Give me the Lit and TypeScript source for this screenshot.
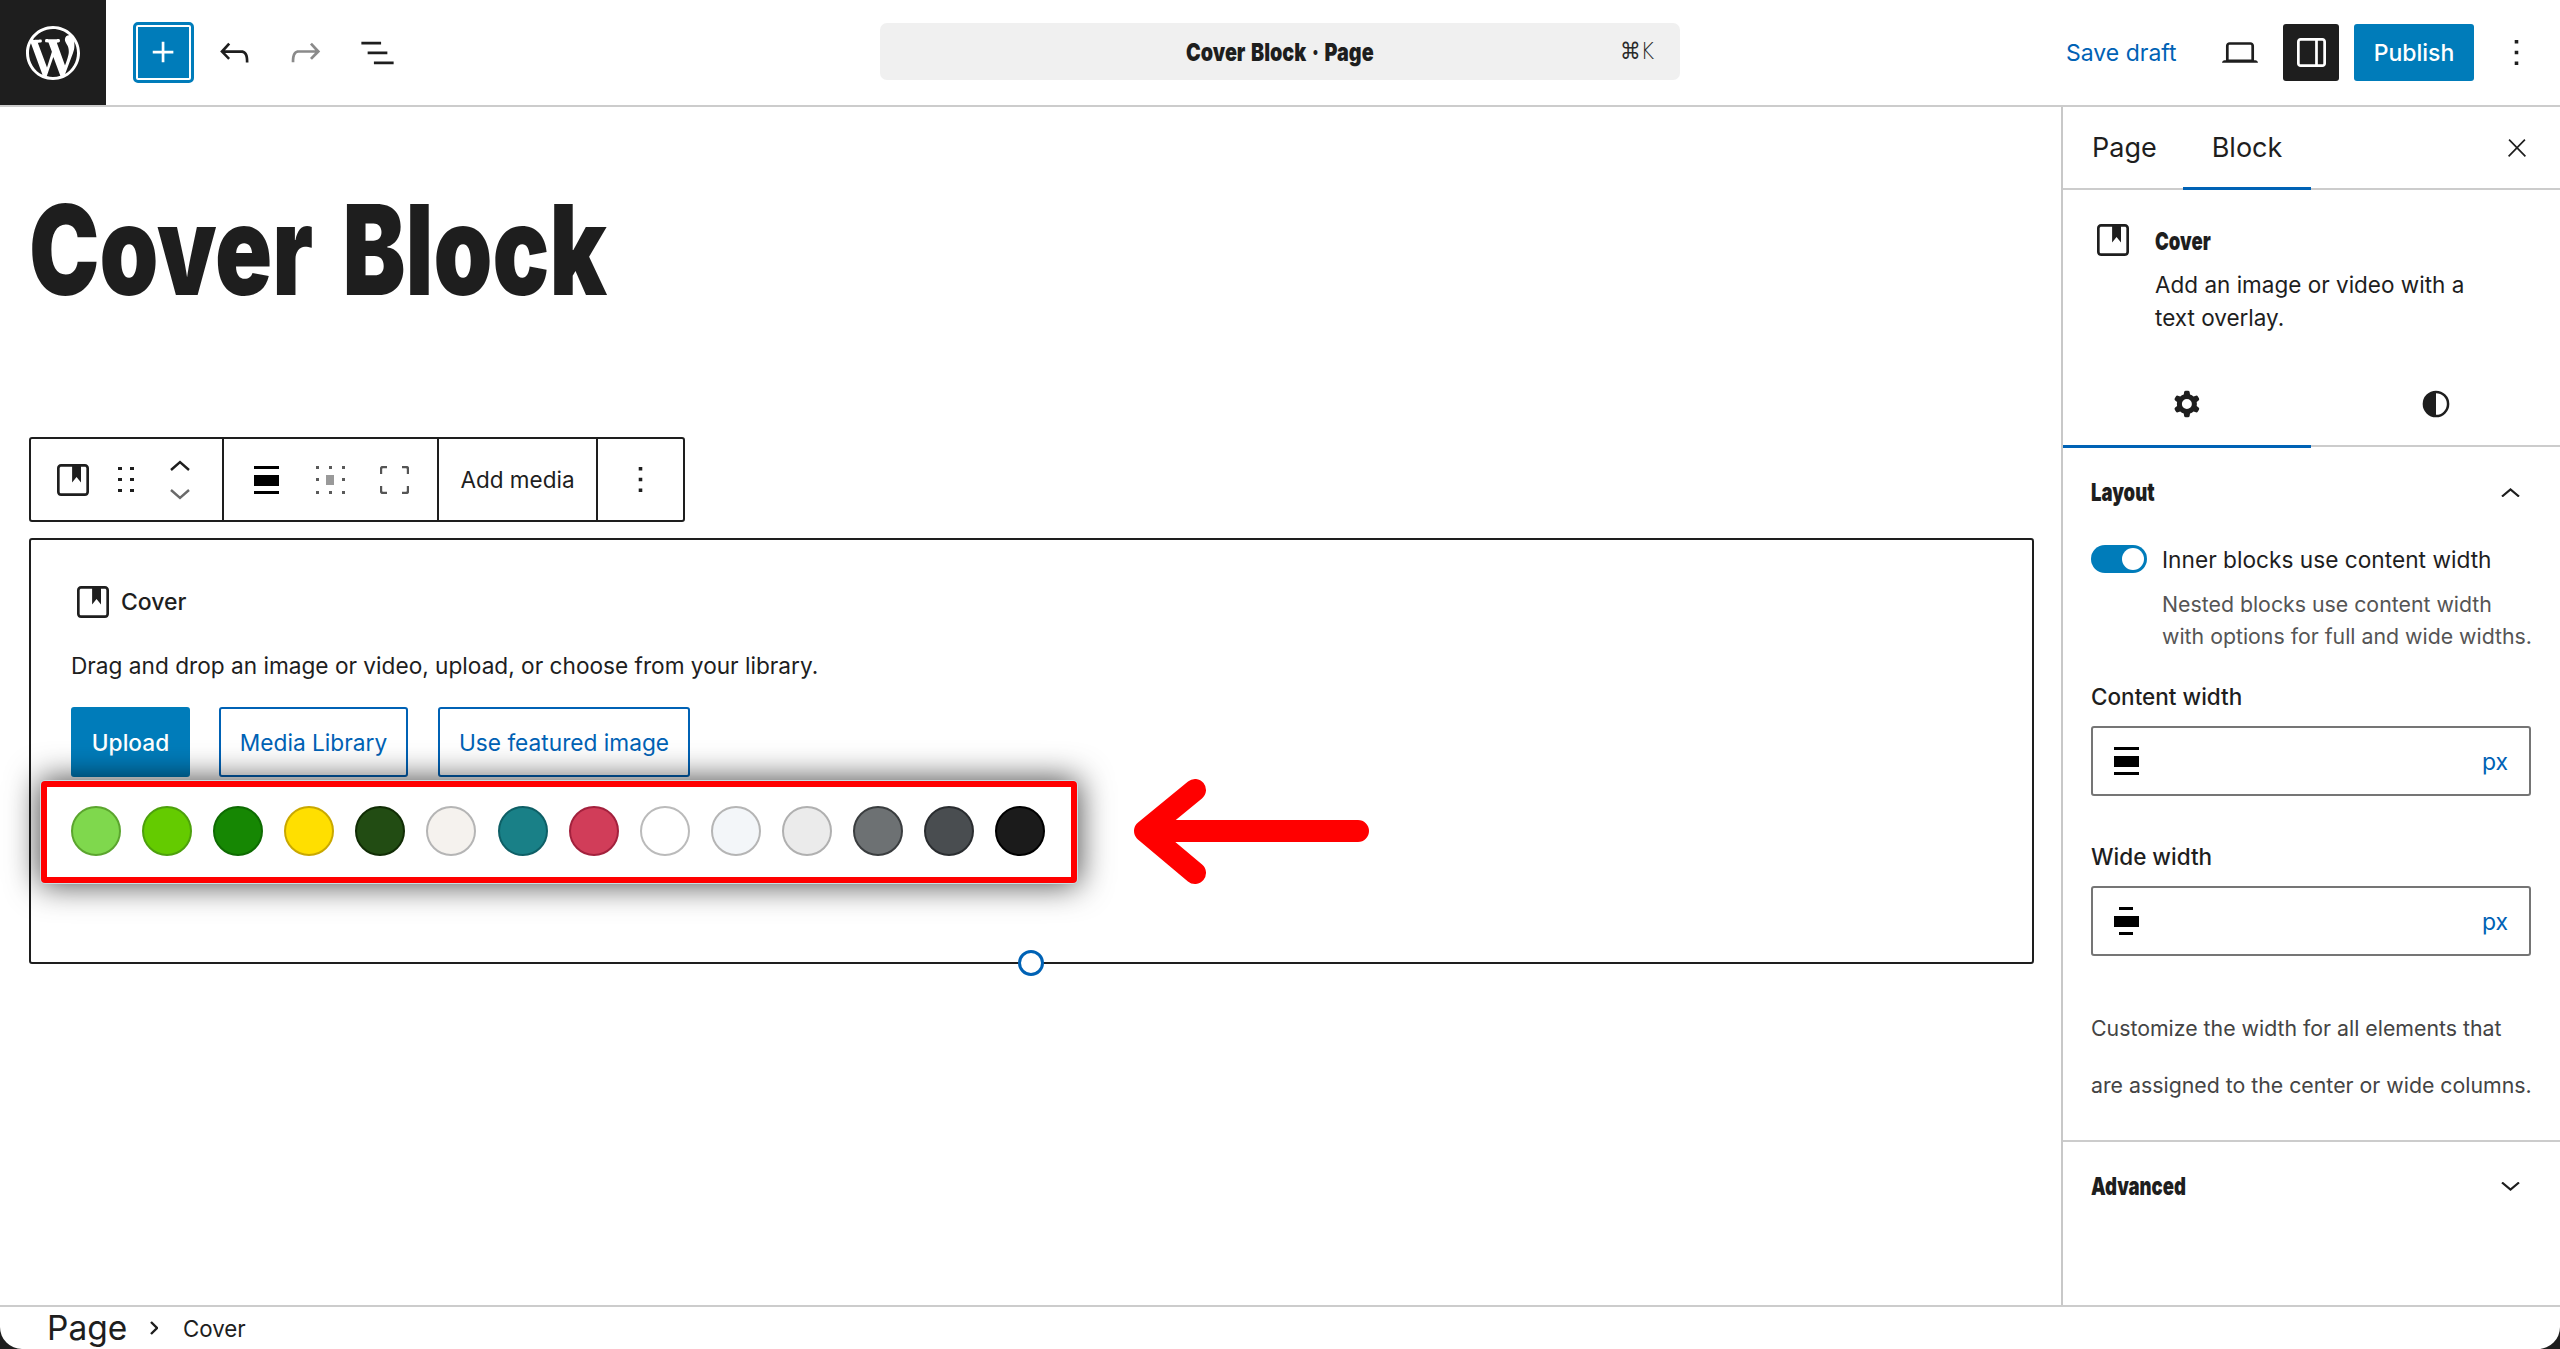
import { LitElement, html, css } from "lit";
import { customElement } from "lit/decorators.js";

const P = {
  plus: "M11 12.5V17.5H12.5V12.5H17.5V11H12.5V6H11V11H6V12.5H11Z",
  undo: "M18.3 11.7c-.6-.6-1.4-.9-2.3-.9H6.7l2.9-3.3-1.1-1-4.5 5L8.5 16l1-1-2.7-2.7H16c.5 0 .9.2 1.3.5 1 1 1 3.4 1 4.5v.3h1.5v-.2c0-1.5 0-4.3-1.5-5.7z",
  redo: "M15.6 6.5l-1.1 1 2.9 3.3H8c-.9 0-1.7.3-2.3.9-1.4 1.5-1.4 4.2-1.4 5.6v.2h1.5v-.3c0-1.1 0-3.5 1-4.5.3-.3.7-.5 1.3-.5h9.2L14.5 15l1.1 1.1 4.6-4.6-4.6-5z",
  list: "M3 6h11v1.5H3V6Zm3.5 5.5h11V13h-11v-1.5ZM21 17H10v1.5h11V17Z",
  cover: "M18.7 3H5.3C4 3 3 4 3 5.3v13.4C3 20 4 21 5.3 21h13.4c1.3 0 2.3-1 2.3-2.3V5.3C21 4 20 3 18.7 3zm.8 15.7c0 .4-.4.8-.8.8H5.3c-.4 0-.8-.4-.8-.8V5.3c0-.4.4-.8.8-.8h6.2v8.9l2.5-3.1 2.5 3.1V4.5h2.2c.4 0 .8.4.8.8v13.4z",
  more: "M13 19h-2v-2h2v2zm0-6h-2v-2h2v2zm0-6h-2V5h2v2z",
  close: "M13 11.8l6.1-6.3-1-1-6.1 6.2-6.1-6.2-1 1 6.1 6.3-6.5 6.7 1 1 6.5-6.6 6.5 6.6 1-1z",
  cog: "M10.289 4.836A1 1 0 0 1 11.275 4h1.306a1 1 0 0 1 .987.836l.244 1.466c.787.26 1.503.679 2.108 1.218l1.393-.522a1 1 0 0 1 1.216.437l.653 1.13a1 1 0 0 1-.23 1.273l-1.148.944a6.025 6.025 0 0 1 0 2.435l1.149.946a1 1 0 0 1 .23 1.272l-.653 1.13a1 1 0 0 1-1.216.437l-1.394-.522c-.605.54-1.32.958-2.108 1.218l-.244 1.466a1 1 0 0 1-.987.836h-1.306a1 1 0 0 1-.986-.836l-.244-1.466a5.995 5.995 0 0 1-2.108-1.218l-1.394.522a1 1 0 0 1-1.217-.436l-.653-1.131a1 1 0 0 1 .23-1.272l1.149-.946a6.026 6.026 0 0 1 0-2.435l-1.148-.944a1 1 0 0 1-.23-1.272l.653-1.131a1 1 0 0 1 1.217-.437l1.393.522a5.994 5.994 0 0 1 2.108-1.218l.244-1.466ZM14.929 12a3 3 0 1 1-6 0 3 3 0 0 1 6 0Z",
  half: "M12 4a8 8 0 1 0 0 16 8 8 0 0 0 0-16Zm0 14.5v-13a6.5 6.5 0 0 1 0 13Z",
  side: "M18 4H6c-1.1 0-2 .9-2 2v12c0 1.1.9 2 2 2h12c1.1 0 2-.9 2-2V6c0-1.1-.9-2-2-2zm-4 14.5H6c-.3 0-.5-.2-.5-.5V6c0-.3.2-.5.5-.5h8v13zm4.5-.5c0 .3-.2.5-.5.5h-2.5v-13H18c.3 0 .5.2.5.5v12z",
  laptop: "M20.5 16h-.7V8c0-1.1-.9-2-2-2H6.2c-1.1 0-2 .9-2 2v8h-.7c-.8 0-1.5.7-1.5 1.5h20c0-.8-.7-1.5-1.5-1.5zM5.7 8c0-.3.2-.5.5-.5h11.6c.3 0 .5.2.5.5v7.6H5.7V8z",
  wp: "M20 10c0-5.51-4.49-10-10-10C4.48 0 0 4.49 0 10c0 5.52 4.48 10 10 10 5.51 0 10-4.48 10-10zM7.78 15.37L4.37 6.22c.55-.02 1.17-.08 1.17-.08.5-.06.44-1.13-.06-1.11 0 0-1.45.11-2.37.11-.18 0-.37 0-.58-.01C4.12 2.69 6.87 1.11 10 1.11c2.33 0 4.45.87 6.05 2.34-.68-.11-1.65.39-1.65 1.58 0 .74.45 1.36.9 2.1.35.61.55 1.36.55 2.46 0 1.49-1.4 5-1.4 5l-3.03-8.37c.54-.02.82-.17.82-.17.5-.05.44-1.25-.06-1.22 0 0-1.44.12-2.38.12-.87 0-2.33-.12-2.33-.12-.5-.03-.56 1.2-.06 1.22l.92.08 1.26 3.41zM17.41 10c.24-.64.74-1.87.43-4.25.7 1.29 1.05 2.71 1.05 4.25 0 3.29-1.73 6.24-4.4 7.78.97-2.59 1.94-5.2 2.92-7.78zM6.1 18.09C3.12 16.65 1.11 13.53 1.11 10c0-1.3.23-2.48.72-3.59C3.25 10.3 4.67 14.2 6.1 18.09zm4.03-6.63l2.58 6.98c-.86.29-1.76.45-2.71.45-.79 0-1.57-.11-2.29-.33.81-2.38 1.62-4.74 2.42-7.1z",
};

const icon = (d: string, w: number, vb = "0 0 24 24", cls = "", h = w) =>
  html`<svg class="ic ${cls}" width=${w} height=${h} viewBox=${vb} fill="currentColor"><path fill-rule="evenodd" d=${d}></path></svg>`;

const contentIcon = (narrow: boolean) => html`<svg class="wicon" width="25" height="28" viewBox="0 0 25 28" fill="#000">
  <rect x=${narrow ? 5 : 0} y="0" width=${narrow ? 14 : 25} height="3"></rect>
  <rect x="0" y="9" width="25" height="11"></rect>
  <rect x=${narrow ? 5 : 0} y="25" width=${narrow ? 14 : 25} height="3"></rect>
</svg>`;

const swatches: [string, string][] = [
  ["#7fd84d", "#5ba52e"], ["#64cb00", "#4da00c"], ["#168703", "#0e6b02"], ["#ffdf00", "#c9a800"],
  ["#224c13", "#112d05"], ["#f5f2ee", "#b5b5b5"], ["#198087", "#0e5f66"], ["#d13d59", "#a3213d"],
  ["#ffffff", "#bbbbbb"], ["#f3f6f9", "#b5b5b5"], ["#ebebeb", "#b0b0b0"], ["#6d7173", "#3a3d3f"],
  ["#494d50", "#2a2d30"], ["#1b1b1b", "#000000"],
];

@customElement("app-root")
export class AppRoot extends LitElement {
  static styles = css`
    :host { display: block; height: 1349px; overflow: hidden; background: #fff; color: #1e1e1e;
      font-family: Inter, "Liberation Sans", sans-serif; }
    * { box-sizing: border-box; }
    .ic { display: block; flex: none; }
    .app { position: relative; height: 1349px; display: flex; flex-direction: column; }
    .cond { display: inline-block; font-family: Inter, "Liberation Sans", sans-serif; font-weight: 900; transform: scaleX(.74); transform-origin: left center; white-space: nowrap; }

    header { height: 107px; flex: none; border-bottom: 2px solid #ccc; display: flex; align-items: flex-start; }
    .left { width: 880px; display: flex; align-items: center; height: 105px; }
    .logo { width: 106px; height: 105px; background: #1e1e1e; color: #fff; display: flex; align-items: center; justify-content: center; }
    .plus { width: 61px; height: 61px; margin-left: 27px; border: 3px solid #007cba; border-radius: 5px; padding: 2px; background: #fff; }
    .plus div { width: 100%; height: 100%; background: #007cba; color: #fff; display: flex; align-items: center; justify-content: center; }
    .undo { margin-left: 19px; }
    .redo { margin-left: 28px; color: #8a8a8a; }
    .list { margin-left: 29px; }
    .cc { width: 800px; height: 57px; margin-top: 23px; background: #f0f0f0; border-radius: 7px; display: flex; align-items: center; position: relative; justify-content: center; }
    .cc .t { font-size: 25px; transform: scaleX(.79); transform-origin: center; word-spacing: 2px; }
    .cc .k { position: absolute; right: 26px; top: 0; line-height: 57px; font-size: 23px; font-family: "DejaVu Sans", sans-serif; color: #2a2a2a; font-weight: 300; transform: scaleX(.9); transform-origin: right; }
    .right { flex: 1; height: 105px; display: flex; align-items: center; }
    .save { margin-left: 386px; font-size: 23px; color: #0062b5; width: 108px; white-space: nowrap; }
    .laptop { margin-left: 48px; }
    .sideb { margin-left: 25px; width: 56px; height: 57px; background: #1e1e1e; color: #fff; border-radius: 3px; display: flex; align-items: center; justify-content: center; }
    .pub { margin-left: 15px; width: 120px; height: 57px; background: #007cba; color: #fff; border-radius: 3px; font-size: 23px; font-weight: 500; display: flex; align-items: center; justify-content: center; }
    .hmore { margin-left: 21px; }

    .body { flex: 1; display: flex; min-height: 0; }
    main { width: 2061px; flex: none; padding: 80px 0 0 29px; }
    h1 { margin: 0 0 125px 0; font-size: 125px; line-height: 125px; height: 125px; color: #1e1e1e; }
    h1 .cond { transform: scaleX(.755); word-spacing: 14px; }

    .tb { width: 656px; height: 85px; border: 2px solid #1e1e1e; border-radius: 3px; display: flex; align-items: center; }
    .g { height: 100%; display: flex; align-items: center; border-right: 2px solid #1e1e1e; }
    .g1 { width: 193px; padding-left: 26px; }
    .g2 { width: 215px; padding-left: 30px; }
    .g3 { width: 159px; justify-content: center; font-size: 22.5px; }
    .g4 { flex: 1; justify-content: center; border-right: 0; }
    .drag { margin-left: 29px; }
    .updown { margin-left: 36px; display: flex; flex-direction: column; gap: 18px; }
    .dots { margin-left: 37px; }
    .full { margin-left: 35px; }

    .ph { position: relative; margin-top: 16px; width: 2005px; height: 426px; border: 2px solid #1e1e1e; border-radius: 3px; padding: 46px 0 0 40px; }
    .phl { display: flex; align-items: center; gap: 12px; margin-left: 6px; height: 32px; font-size: 23px; font-weight: 500; }
    .phd { margin-top: 33px; font-size: 22.65px; line-height: 30px; white-space: nowrap; }
    .btns { margin-top: 26px; display: flex; gap: 29px; }
    .btn { height: 70px; border-radius: 3px; display: flex; align-items: center; justify-content: center; font-size: 22.7px; border: 2px solid #0062b5; color: #0062b5; background: #fff; }
    .b1 { width: 119px; background: #007cba; border-color: #007cba; color: #fff; font-weight: 500; }
    .b2 { width: 189px; }
    .b3 { width: 252px; margin-left: 1px; }
    .hl { position: relative; z-index: 2; margin: 4px 0 0 -30px; width: 1036px; height: 102px; border: 6px solid #f00; border-radius: 4px; background: #fff; display: flex; align-items: center; gap: 21.1px; padding: 0 0 2px 24px; box-shadow: 0 0 0 1px #c4dfe4, 0 0 32px 2px rgba(0,0,0,.72); }
    .sw { width: 50px; height: 50px; border-radius: 50%; border: 2px solid; flex: none; }
    .arrow { position: absolute; left: 1090px; top: 228px; z-index: 2; }
    .handle { position: absolute; left: 987px; bottom: -14px; width: 26px; height: 26px; border-radius: 50%; border: 3px solid #0062b5; background: #fff; z-index: 3; }

    aside { flex: 1; border-left: 2px solid #c8c8c8; min-width: 0; }
    .tabs { height: 83px; border-bottom: 2px solid #ccc; display: flex; align-items: stretch; }
    .tab { display: flex; align-items: center; font-size: 27px; position: relative; }
    .t1 { width: 120px; padding-left: 29px; }
    .t2 { width: 128px; justify-content: center; }
    .t2::after, .sub1::after { content: ""; position: absolute; left: 0; right: 0; bottom: -2px; height: 3px; background: #0062b5; }
    .x { margin: 32px 34px 0 auto; }
    .blk { display: grid; grid-template-columns: 32px 1fr; column-gap: 26px; padding: 34px 0 0 34px; height: 161px; }
    .blk .n { margin-top: 2px; font-size: 25px; line-height: 30px; }
    .blk .d { margin-top: 12px; font-size: 22.5px; line-height: 33px; }
    .sub { height: 96px; padding-top: 12px; display: grid; grid-template-columns: 248px 1fr; border-bottom: 2px solid #ccc; }
    .sub > div { display: flex; align-items: center; justify-content: center; position: relative; }
    .sub1::after { bottom: -3px; }
    .panel { padding: 30px 0 26px 28px; border-bottom: 2px solid #ccc; }
    .ph2 { display: flex; align-items: center; justify-content: space-between; height: 30px; padding-right: 40px; font-size: 25px; }
    .chev { width: 19px; height: 9px; flex: none; }
    .tr { margin-top: 38px; display: flex; align-items: center; height: 28px; font-size: 22.7px; white-space: nowrap; }
    .tg { width: 56px; height: 28px; border-radius: 14px; background: #007cba; position: relative; margin-right: 15px; flex: none; }
    .tg::after { content: ""; position: absolute; right: 3px; top: 3px; width: 22px; height: 22px; border-radius: 50%; background: #fff; }
    .help { margin: 15px 0 0 71px; font-size: 21.3px; line-height: 32px; color: #555; white-space: nowrap; }
    .lab { margin-top: 30px; font-size: 22.5px; line-height: 30px; font-weight: 500; }
    .lab.w2 { margin-top: 46px; }
    .inp { margin-top: 14px; width: 440px; height: 70px; border: 2px solid #757575; border-radius: 3px; display: flex; align-items: center; justify-content: space-between; padding: 0 21px 0 21px; }
    .inp span { color: #0062b5; font-size: 23px; margin-top: 2px; }
    .cust { margin-top: 44px; font-size: 21.3px; line-height: 57px; color: #444; white-space: nowrap; }
    .adv { padding: 29px 40px 0 28px; display: flex; align-items: center; justify-content: space-between; font-size: 25px; line-height: 30px; }

    footer { height: 44px; flex: none; border-top: 2px solid #ccc; display: flex; align-items: center; padding-left: 47px; }
    .fp { font-size: 33.5px; width: 103px; }
    .fc { font-size: 22.3px; margin-left: 25px; }
    .fs { width: 8px; height: 14px; }
    .corner { position: absolute; bottom: 0; }
    .cl { left: 0; }
    .cr { right: 0; }
  `;

  render() {
    return html`<div class="app">
      <header>
        <div class="left">
          <div class="logo">${icon(P.wp, 54, "0 0 20 20")}</div>
          <div class="plus"><div>${icon(P.plus, 43)}</div></div>
          <div class="undo">${icon(P.undo, 43)}</div>
          <div class="redo">${icon(P.redo, 43)}</div>
          <div class="list">${icon(P.list, 43)}</div>
        </div>
        <div class="cc"><span class="t cond">Cover Block · Page</span><span class="k">⌘K</span></div>
        <div class="right">
          <div class="save">Save draft</div>
          <div class="laptop">${icon(P.laptop, 36, "2 6 20 11.5", "", 21)}</div>
          <div class="sideb">${icon(P.side, 29, "4 4 16 16")}</div>
          <div class="pub">Publish</div>
          <div class="hmore">${icon(P.more, 43)}</div>
        </div>
      </header>
      <div class="body">
        <main>
          <h1><span class="cond">Cover Block</span></h1>
          <div class="tb">
            <div class="g g1">
              ${icon(P.cover, 32, "3 3 18 18")}
              <svg class="ic drag" width="16" height="26" viewBox="0 0 16 26" fill="#1e1e1e"><rect x="0" y="0" width="4" height="3"/><rect x="12" y="0" width="4" height="3"/><rect x="0" y="11" width="4" height="3"/><rect x="12" y="11" width="4" height="3"/><rect x="0" y="22" width="4" height="3"/><rect x="12" y="22" width="4" height="3"/></svg>
              <div class="updown">
                <svg class="ic" width="20" height="11" viewBox="0 0 20 11" fill="none" stroke="#1e1e1e" stroke-width="2.4"><path d="M1 10l9-8 9 8"/></svg>
                <svg class="ic" width="20" height="11" viewBox="0 0 20 11" fill="none" stroke="#6a6a6a" stroke-width="2.4"><path d="M1 1l9 8 9-8"/></svg>
              </div>
            </div>
            <div class="g g2">
              ${contentIcon(false)}
              <svg class="ic dots" width="29" height="28" viewBox="0 0 29 28" fill="#5a5a5a"><rect x="0" y="0" width="3" height="3"/><rect x="13" y="0" width="3" height="3"/><rect x="26" y="0" width="3" height="3"/><rect x="0" y="12" width="3" height="3"/><rect x="26" y="12" width="3" height="3"/><rect x="0" y="25" width="3" height="3"/><rect x="13" y="25" width="3" height="3"/><rect x="26" y="25" width="3" height="3"/><rect x="10" y="9" width="8" height="10" fill="#999"/></svg>
              <svg class="ic full" width="29" height="28" viewBox="0 0 29 28" fill="none" stroke="#555" stroke-width="2.4"><path d="M1 8V3q0-2 2-2h4M22 1h4q2 0 2 2v5M28 20v5q0 2-2 2h-4M7 27H3q-2 0-2-2v-5"/></svg>
            </div>
            <div class="g g3">Add media</div>
            <div class="g g4">${icon(P.more, 43)}</div>
          </div>
          <div class="ph">
            <div class="phl">${icon(P.cover, 32, "3 3 18 18")}<span>Cover</span></div>
            <div class="phd">Drag and drop an image or video, upload, or choose from your library.</div>
            <div class="btns">
              <div class="btn b1">Upload</div>
              <div class="btn b2">Media Library</div>
              <div class="btn b3">Use featured image</div>
            </div>
            <div class="hl">
              ${swatches.map(([bg, bd]) => html`<div class="sw" style="background:${bg};border-color:${bd}"></div>`)}
            </div>
            <svg class="arrow" width="250" height="118" viewBox="0 0 250 118" fill="none" stroke="#f00" stroke-width="22" stroke-linecap="round" stroke-linejoin="round"><path d="M237 63H24M74 22L24 63l50 42"/></svg>
            <div class="handle"></div>
          </div>
        </main>
        <aside>
          <div class="tabs">
            <div class="tab t1">Page</div>
            <div class="tab t2">Block</div>
            <div class="x">${icon(P.close, 18, "4.5 4.5 15 15")}</div>
          </div>
          <div class="blk">
            ${icon(P.cover, 32, "3 3 18 18")}
            <div>
              <div class="n cond">Cover</div>
              <div class="d">Add an image or video with a<br />text overlay.</div>
            </div>
          </div>
          <div class="sub">
            <div class="sub1">${icon(P.cog, 40)}</div>
            <div>${icon(P.half, 40)}</div>
          </div>
          <div class="panel">
            <div class="ph2"><span class="cond">Layout</span>
              <svg class="chev" viewBox="0 0 19 9" fill="none" stroke="#1e1e1e" stroke-width="2.2"><path d="M1 8.5l8.5-7 8.5 7"/></svg>
            </div>
            <div class="tr"><div class="tg"></div>Inner blocks use content width</div>
            <div class="help">Nested blocks use content width<br />with options for full and wide widths.</div>
            <div class="lab">Content width</div>
            <div class="inp">${contentIcon(false)}<span>px</span></div>
            <div class="lab w2">Wide width</div>
            <div class="inp">${contentIcon(true)}<span>px</span></div>
            <div class="cust">Customize the width for all elements that<br />are assigned to the center or wide columns.</div>
          </div>
          <div class="adv"><span class="cond">Advanced</span>
            <svg class="chev" viewBox="0 0 19 9" fill="none" stroke="#1e1e1e" stroke-width="2.2"><path d="M1 .5l8.5 7 8.5-7"/></svg>
          </div>
        </aside>
      </div>
      <footer>
        <div class="fp">Page</div>
        <svg class="fs" viewBox="0 0 8 14" fill="none" stroke="#1e1e1e" stroke-width="2.4"><path d="M1 1l6 6-6 6"/></svg>
        <div class="fc">Cover</div>
      </footer>
      <svg class="corner cl" width="22" height="22" viewBox="0 0 22 22" fill="#1e1e1e"><path d="M0 0A22 22 0 0 0 22 22H0Z"/></svg>
      <svg class="corner cr" width="22" height="22" viewBox="0 0 22 22" fill="#1e1e1e"><path d="M22 0A22 22 0 0 1 0 22H22Z"/></svg>
    </div>`;
  }
}
